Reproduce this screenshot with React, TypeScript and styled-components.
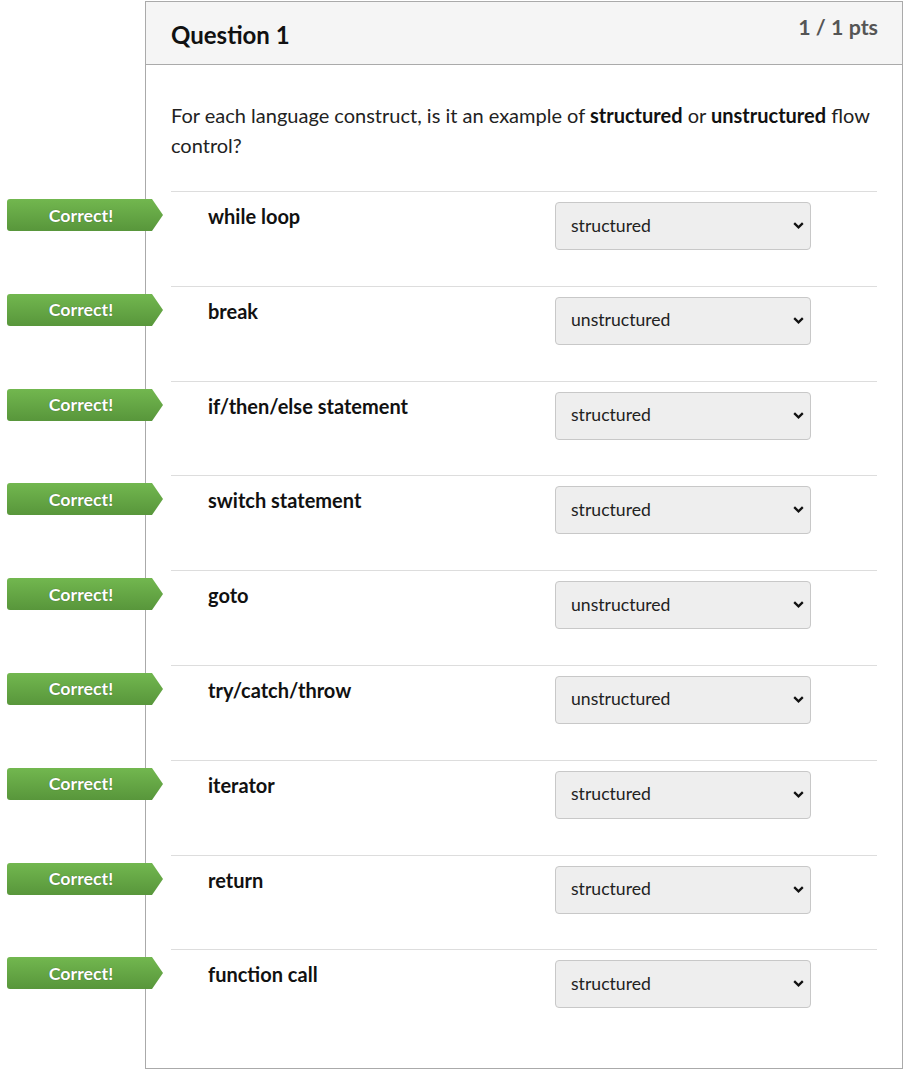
import React from 'react';
import styled, { createGlobalStyle } from 'styled-components';

type Answer = {
  label: string;
  value: 'structured' | 'unstructured';
};

const answers: Answer[] = [
  { label: 'while loop', value: 'structured' },
  { label: 'break', value: 'unstructured' },
  { label: 'if/then/else statement', value: 'structured' },
  { label: 'switch statement', value: 'structured' },
  { label: 'goto', value: 'unstructured' },
  { label: 'try/catch/throw', value: 'unstructured' },
  { label: 'iterator', value: 'structured' },
  { label: 'return', value: 'structured' },
  { label: 'function call', value: 'structured' },
];

const GlobalStyle = createGlobalStyle`
  body {
    margin: 0;
    background: #fff;
    font-family: Lato, "Open Sans", sans-serif;
    color: #2d3b45;
  }
`;

const App: React.FC = () => {
  return (
    <>
      <GlobalStyle />
      <Page>
        <Card>
          <Header>
            <Title>Question 1</Title>
            <Points>1 / 1 pts</Points>
          </Header>

          <Body>
            <QuestionText>
              For each language construct, is it an example of <b>structured</b> or{' '}
              <b>unstructured</b> flow control?
            </QuestionText>

            <Rows>
              {answers.map((a, i) => (
                <Row key={a.label}>
                  <Badge>
                    <BadgeBody>Correct!</BadgeBody>
                    <BadgeTip viewBox='0 0 11 32' preserveAspectRatio='none'>
                      <defs>
                        <linearGradient id={`badge-grad-${i}`} x1='0' y1='0' x2='0' y2='1'>
                          <stop offset='0' stopColor='#72b74f' />
                          <stop offset='1' stopColor='#58963b' />
                        </linearGradient>
                      </defs>
                      <polygon points='0,0 11,16 0,32' fill={`url(#badge-grad-${i})`} />
                    </BadgeTip>
                  </Badge>

                  <Label>{a.label}</Label>

                  <SelectWrap>
                    <Select defaultValue={a.value}>
                      <option value='structured'>structured</option>
                      <option value='unstructured'>unstructured</option>
                    </Select>
                    <Chevron viewBox='0 0 11 7'>
                      <path d='M1.2 1.2 L5.5 5.3 L9.8 1.2' fill='none' stroke='#111' strokeWidth='2.3' />
                    </Chevron>
                  </SelectWrap>
                </Row>
              ))}
            </Rows>
          </Body>
        </Card>
      </Page>
    </>
  );
};

const Page = styled.div`
  padding: 1px 1px 0 145px;
`;

const Card = styled.div`
  border: 1px solid #aaa;
  height: 1068px;
  box-sizing: border-box;
  background: #fff;
`;

const Header = styled.div`
  display: flex;
  justify-content: space-between;
  align-items: flex-start;
  height: 63px;
  box-sizing: border-box;
  padding: 0 24px 0 25px;
  background: #f5f5f5;
  border-bottom: 1px solid #aaa;
`;

const Title = styled.h2`
  margin: 0;
  padding-top: 18px;
  font-size: 24px;
  line-height: 30px;
  font-weight: 700;
  color: #111;
`;

const Points = styled.div`
  padding-top: 12px;
  font-size: 21.4px;
  line-height: 26px;
  font-weight: 700;
  color: #555;
`;

const Body = styled.div`
  padding: 35px 25px 0 25px;
`;

const QuestionText = styled.p`
  margin: 0 0 31px;
  font-size: 20px;
  line-height: 30px;
  color: #222;

  b {
    color: #111;
  }
`;

const Rows = styled.div`
  display: flex;
  flex-direction: column;
`;

const Row = styled.div`
  position: relative;
  display: flex;
  align-items: flex-start;
  height: 94.8px;
  box-sizing: border-box;
  border-top: 1px solid #ddd;
`;

const Badge = styled.div`
  position: absolute;
  left: -164px;
  top: 7px;
  display: flex;
  height: 32px;
`;

const BadgeBody = styled.div`
  width: 145px;
  height: 32px;
  display: flex;
  align-items: center;
  justify-content: center;
  padding: 0 0 1px 3px;
  box-sizing: border-box;
  border-radius: 3px 0 0 3px;
  background: linear-gradient(#72b74f, #58963b);
  color: #fff;
  font-size: 17.8px;
  font-weight: 700;
  text-shadow: 0 0 1px rgba(0, 0, 0, 0.45);
`;

const BadgeTip = styled.svg`
  width: 11px;
  height: 32px;
`;

const Label = styled.div`
  width: 347px;
  margin-left: 37px;
  padding-top: 12px;
  font-size: 20px;
  line-height: 24px;
  font-weight: 700;
  color: #111;
`;

const SelectWrap = styled.div`
  position: relative;
  margin-top: 10px;
`;

const Select = styled.select`
  appearance: none;
  width: 256px;
  height: 48px;
  padding: 0 30px 2px 15px;
  border: 1px solid #c8c8c8;
  border-radius: 4px;
  background: #eeeeee;
  font-family: Lato, "Open Sans", sans-serif;
  font-size: 17.6px;
  color: #222;
  outline: none;
`;

const Chevron = styled.svg`
  position: absolute;
  right: 7px;
  top: 20px;
  width: 11px;
  height: 7px;
  pointer-events: none;
`;

export default App;
